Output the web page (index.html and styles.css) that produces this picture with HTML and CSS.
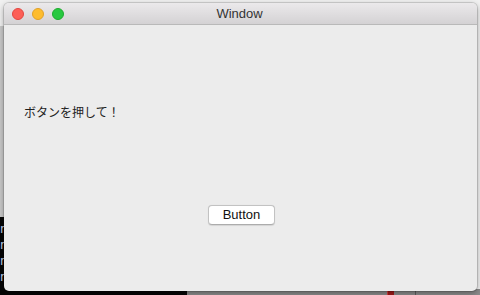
FILE: index.html
```html
<!DOCTYPE html>
<html>
<head>
<meta charset="utf-8">
<link rel="stylesheet" href="styles.css">
</head>
<body>
<div class="desktop">
  <div class="side-panel"></div>
  <div class="terminal">
    <div class="term-line">n</div>
    <div class="term-line">n</div>
    <div class="term-line">n</div>
    <div class="term-line">n</div>
  </div>
  <div class="dock-strip">
    <span class="dock-mark"></span>
    <span class="dock-line"></span>
  </div>
  <div class="window">
    <div class="titlebar">
      <div class="lights">
        <span class="light red"></span>
        <span class="light yellow"></span>
        <span class="light green"></span>
      </div>
      <div class="title">Window</div>
    </div>
    <div class="content">
      <div class="label">ボタンを押して！</div>
      <div class="button-row">
        <button class="btn">Button</button>
      </div>
    </div>
  </div>
</div>
</body>
</html>
```
FILE: styles.css
```css
html, body {
  margin: 0;
  padding: 0;
}
body {
  width: 480px;
  height: 295px;
  overflow: hidden;
  font-family: "Liberation Sans", "Noto Sans CJK JP", sans-serif;
}
.desktop {
  position: relative;
  width: 480px;
  height: 295px;
  background: #f1f1f1;
  overflow: hidden;
}
.side-panel {
  position: absolute;
  left: 0;
  top: 26px;
  width: 6px;
  height: 192px;
  background: #c9c9c9;
}
.terminal {
  position: absolute;
  left: 0;
  top: 217px;
  width: 200px;
  height: 78px;
  background: #050505;
  padding-top: 4px;
  box-sizing: border-box;
}
.term-line {
  font-family: "DejaVu Sans Mono", monospace;
  font-size: 12px;
  line-height: 16px;
  color: #c9d6ee;
}
.dock-strip {
  position: absolute;
  left: 187px;
  top: 289px;
  width: 293px;
  height: 6px;
  background: #8b8b8b;
}
.dock-mark {
  position: absolute;
  left: 200px;
  top: 0;
  width: 6px;
  height: 6px;
  background: #a01818;
  border-left: 1px solid #d04040;
}
.dock-line {
  position: absolute;
  left: 228px;
  top: 0;
  width: 1px;
  height: 6px;
  background: #5c5c5c;
}
.window {
  position: absolute;
  left: 4px;
  top: 3px;
  width: 473px;
  height: 288px;
  border-radius: 5px;
  background: #ececec;
  box-shadow: 0 0 0 1px rgba(0,0,0,0.12), 0 2px 6px rgba(0,0,0,0.35);
  display: flex;
  flex-direction: column;
  overflow: hidden;
}
.titlebar {
  position: relative;
  height: 22px;
  flex: 0 0 22px;
  background: linear-gradient(#ebe9eb, #d4d2d4);
  border-bottom: 1px solid #b9b9b9;
  box-sizing: border-box;
  display: flex;
  align-items: center;
  justify-content: center;
}
.lights {
  position: absolute;
  left: 8px;
  top: 5px;
  display: flex;
  gap: 8px;
}
.light {
  width: 12px;
  height: 12px;
  border-radius: 50%;
  box-sizing: border-box;
}
.red { background: #fc5f57; border: 1px solid #e2463f; }
.yellow { background: #fdbc2e; border: 1px solid #e0a028; }
.green { background: #28c840; border: 1px solid #1eab2e; }
.title {
  font-size: 13px;
  color: #333333;
  line-height: 22px;
  margin-left: -2px;
}
.content {
  flex: 1;
  position: relative;
  display: flex;
  flex-direction: column;
}
.label {
  margin-top: 78px;
  margin-left: 20px;
  font-family: "Noto Sans CJK JP", sans-serif;
  font-size: 12px;
  line-height: 18px;
  color: #1e1e1e;
}
.button-row {
  margin-top: 84px;
  display: flex;
  justify-content: center;
  padding-left: 2px;
}
.btn {
  width: 67px;
  height: 20px;
  padding: 0;
  font-family: "Liberation Sans", sans-serif;
  font-size: 13px;
  color: #111111;
  background: #ffffff;
  border: 1px solid #c2c2c2;
  border-bottom-color: #acacac;
  border-radius: 4px;
  box-shadow: 0 0.5px 1px rgba(0,0,0,0.1);
  line-height: 18px;
}
```
